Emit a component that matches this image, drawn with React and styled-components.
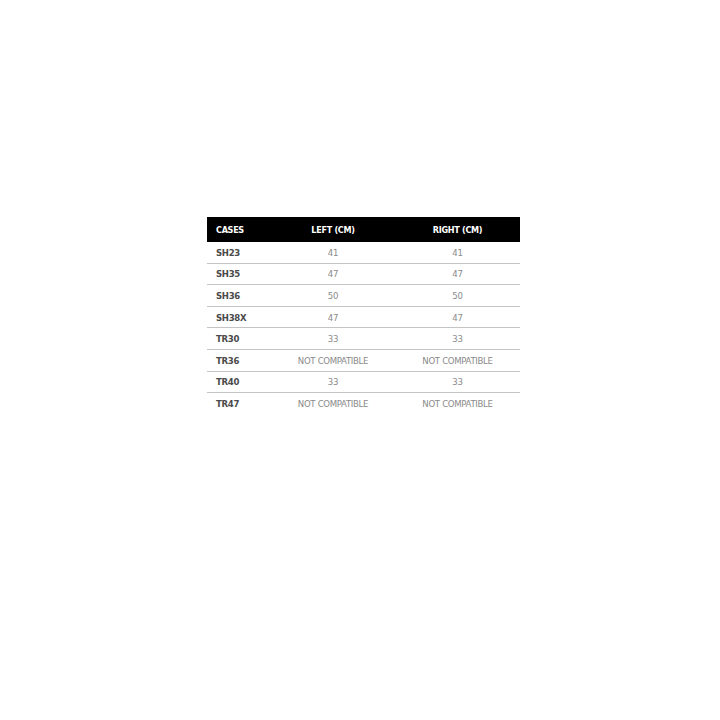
import React from 'react';
import styled, { createGlobalStyle } from 'styled-components';

const GlobalStyle = createGlobalStyle`
  html, body {
    margin: 0;
    padding: 0;
    background: #ffffff;
  }
  body {
    font-family: "DejaVu Sans", "Liberation Sans", sans-serif;
    font-stretch: condensed;
  }
`;

const Page = styled.div`
  width: 720px;
  height: 720px;
  padding: 217px 0 0 207px;
  box-sizing: border-box;
`;

const Table = styled.table`
  width: 313px;
  border-collapse: collapse;
  table-layout: fixed;
`;

const HeadCell = styled.th`
  background: #000000;
  color: #ffffff;
  height: 25px;
  padding: 0;
  padding-left: ${props => (props.first ? '9px' : '0')};
  font-size: 9px;
  font-weight: bold;
  letter-spacing: -0.3px;
  text-align: ${props => (props.first ? 'left' : 'center')};
  width: ${props => props.w}px;
`;

const Row = styled.tr`
  border-bottom: ${props => (props.last ? 'none' : '1px solid #c4c4c4')};
`;

const CaseCell = styled.td`
  height: 20.6px;
  padding: 0 0 0 9px;
  font-size: 9.5px;
  font-weight: bold;
  color: #4a4a4a;
  letter-spacing: -0.3px;
`;

const ValueCell = styled.td`
  padding: 0;
  text-align: center;
  font-size: 9.5px;
  color: #8a8a8a;
  letter-spacing: -0.3px;
`;

const rows = [
  ['SH23', '41', '41'],
  ['SH35', '47', '47'],
  ['SH36', '50', '50'],
  ['SH38X', '47', '47'],
  ['TR30', '33', '33'],
  ['TR36', 'NOT COMPATIBLE', 'NOT COMPATIBLE'],
  ['TR40', '33', '33'],
  ['TR47', 'NOT COMPATIBLE', 'NOT COMPATIBLE']
];

export default function App() {
  return (
    <Page>
      <GlobalStyle />
      <Table>
        <thead>
          <tr>
            <HeadCell first w={55}>CASES</HeadCell>
            <HeadCell w={124}>LEFT (CM)</HeadCell>
            <HeadCell w={125}>RIGHT (CM)</HeadCell>
          </tr>
        </thead>
        <tbody>
          {rows.map((r, i) => (
            <Row key={r[0]} last={i === rows.length - 1}>
              <CaseCell>{r[0]}</CaseCell>
              <ValueCell>{r[1]}</ValueCell>
              <ValueCell>{r[2]}</ValueCell>
            </Row>
          ))}
        </tbody>
      </Table>
    </Page>
  );
}
